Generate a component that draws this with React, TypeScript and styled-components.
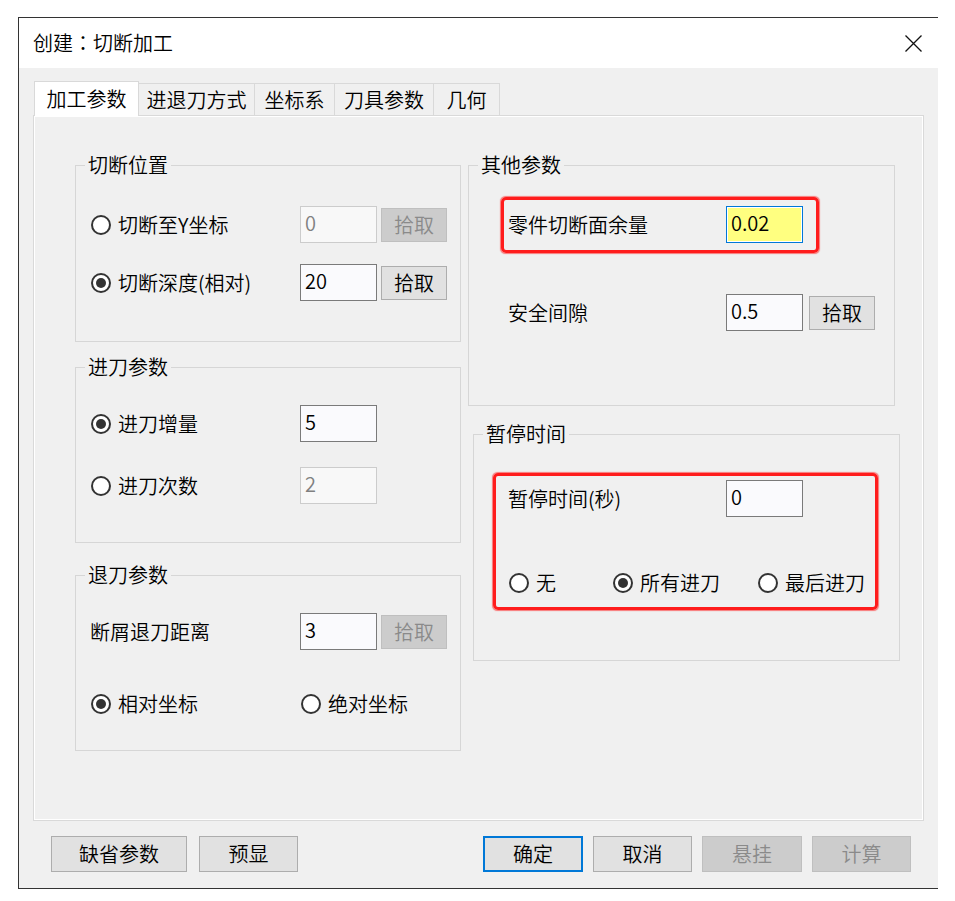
import React from 'react';
import styled, { createGlobalStyle, css } from 'styled-components';

const FONT = `"Noto Sans CJK SC", "Noto Sans", "Liberation Sans", sans-serif`;

const GlobalStyle = createGlobalStyle`
  html, body { margin: 0; padding: 0; background: #ffffff; }
  body { font-family: ${FONT}; color: #000; font-weight: 350; }
  *, *::before, *::after { box-sizing: border-box; }
`;

const Window = styled.div`
  margin: 17px 0 0 18px;
  width: 920px;
  height: 872px;
  border: 1px solid #333333;
  border-right: none;
  background: #f0f0f0;
  display: flex;
  flex-direction: column;
  font-family: ${FONT};
  font-size: 20px;
  font-weight: 350;
`;

const TitleBar = styled.div`
  height: 50px;
  flex: none;
  background: #ffffff;
  display: flex;
  align-items: center;
  justify-content: space-between;
  padding: 0 16px 0 14px;
`;

const Title = styled.span`
  font-size: 20px;
  line-height: 1;
  color: #000;
`;

const Colon = styled.span`
  font-family: "Noto Sans CJK TC", ${FONT};
`;

const CloseButton = styled.span`
  display: flex;
  width: 17px;
  height: 17px;
`;

const Body = styled.div`
  flex: 1;
  display: flex;
  flex-direction: column;
  padding: 13px 14px 0 14px;
`;

const TabStrip = styled.div`
  display: flex;
  align-items: flex-end;
  height: 35px;
  margin-bottom: -1px;
  padding-left: 1px;
  position: relative;
  z-index: 1;
`;

const Tab = styled.div<{ $active?: boolean; $w: number }>`
  width: ${(p) => p.$w}px;
  height: ${(p) => (p.$active ? 35 : 32)}px;
  margin-bottom: ${(p) => (p.$active ? 0 : 1)}px;
  margin-right: -1px;
  border: 1px solid #d9d9d9;
  border-bottom: none;
  background: ${(p) => (p.$active ? '#ffffff' : '#f0f0f0')};
  display: flex;
  align-items: center;
  justify-content: center;
  position: relative;
  z-index: ${(p) => (p.$active ? 2 : 1)};
  font-size: 20px;
  line-height: 1;
  white-space: nowrap;
`;

const Panel = styled.div`
  height: 706px;
  flex: none;
  border: 1px solid #d9d9d9;
  box-shadow: inset 0 0 0 1px #ffffff;
  background: #f0f0f0;
  display: grid;
  grid-template-columns: 386px 432px;
  column-gap: 7px;
  align-items: start;
  padding: 37px 0 0 41px;
`;

const Column = styled.div`
  display: flex;
  flex-direction: column;
  align-items: flex-start;
`;

const Group = styled.fieldset<{ $w: number; $mt?: number; $ml?: number; $pt: number; $pb: number }>`
  width: ${(p) => p.$w}px;
  min-width: 0;
  margin: ${(p) => p.$mt ?? 0}px 0 0 ${(p) => p.$ml ?? 0}px;
  padding: ${(p) => p.$pt}px 0 ${(p) => p.$pb}px 9px;
  border: 1px solid #d6d6d6;
`;

const Legend = styled.legend`
  padding: 0 3px;
  font-size: 20px;
  line-height: 24px;
  color: #000;
`;

const GroupContent = styled.div<{ $gap: number; $indent: number }>`
  display: flex;
  flex-direction: column;
  align-items: flex-start;
  gap: ${(p) => p.$gap}px;
  padding-left: ${(p) => p.$indent}px;
`;

const Row = styled.div<{ $label: number }>`
  display: grid;
  grid-template-columns: ${(p) => p.$label}px auto auto;
  justify-content: start;
  align-items: center;
  height: 37px;
`;

const RadioRow = styled.div<{ $cols: string }>`
  display: grid;
  grid-template-columns: ${(p) => p.$cols};
  justify-content: start;
  align-items: center;
  height: 37px;
`;

const Label = styled.span`
  font-size: 20px;
  line-height: 1;
  white-space: nowrap;
  color: #000;
`;

const RadioLabel = styled.label`
  display: inline-flex;
  align-items: center;
  gap: 7px;
  margin-left: 1px;
  font-size: 20px;
  line-height: 1;
  white-space: nowrap;
`;

const RadioCircle = styled.span<{ $checked?: boolean }>`
  width: 20px;
  height: 20px;
  flex: none;
  border-radius: 50%;
  border: 2px solid #333333;
  background: #ffffff;
  display: flex;
  align-items: center;
  justify-content: center;
  &::after {
    content: '';
    width: 10px;
    height: 10px;
    border-radius: 50%;
    background: ${(p) => (p.$checked ? '#333333' : 'transparent')};
  }
`;

const TextBox = styled.input<{ $focus?: boolean }>`
  width: 77px;
  height: 37px;
  margin: 0;
  padding: 0 4px 4px;
  border: 1px solid #7a7a7a;
  border-radius: 0;
  background: #fafafd;
  font-family: ${FONT};
  font-size: 20px;
  font-weight: 350;
  color: #000;
  outline: none;
  &:disabled {
    border-color: #cccccc;
    background: #f8f8f8;
    color: #808080;
  }
  ${(p) =>
    p.$focus &&
    css`
      border-color: #0078d7;
      background: #ffff80;
      box-shadow: inset 0 0 0 1px #ffffff;
    `}
`;

const Button = styled.button<{ $w: number; $primary?: boolean }>`
  width: ${(p) => p.$w}px;
  height: 36px;
  margin: 0;
  padding: 0;
  font-family: ${FONT};
  font-size: 20px;
  font-weight: 350;
  line-height: 1;
  color: #000;
  background: #e1e1e1;
  border: ${(p) => (p.$primary ? '2px solid #0078d7' : '1px solid #adadad')};
  border-radius: 0;
  &:disabled {
    background: #cccccc;
    border-color: #bfbfbf;
    color: #8a8a8a;
  }
`;

const PickButton = styled(Button)<{ $gap: number }>`
  height: 34px;
  margin-left: ${(p) => p.$gap}px;
`;

const Highlight = styled.div<{ $inline?: boolean }>`
  border: 3px solid #ff1c1c;
  border-radius: 5px;
  box-shadow: 0 0 1px 0.5px rgba(255, 40, 40, 0.6);
  display: flex;
  flex-direction: column;
  align-items: flex-start;
  ${(p) =>
    p.$inline
      ? css`
          margin: -9px -16px -10px -7px;
          padding: 6px 13px 7px 4px;
        `
      : css`
          gap: 47px;
          padding: 4px 10px 6px 12px;
        `}
`;

const ButtonBar = styled.div`
  display: flex;
  justify-content: space-between;
  margin-top: 15px;
  padding: 0 13px 0 18px;
`;

const ButtonGroup = styled.div<{ $gap: number }>`
  display: flex;
  gap: ${(p) => p.$gap}px;
`;

const Radio: React.FC<{ label: string; checked?: boolean }> = ({ label, checked }) => (
  <RadioLabel>
    <RadioCircle $checked={checked} />
    {label}
  </RadioLabel>
);

const tabs = [
  { label: '加工参数', w: 105, active: true },
  { label: '进退刀方式', w: 117 },
  { label: '坐标系', w: 81 },
  { label: '刀具参数', w: 100 },
  { label: '几何', w: 67 },
];

export default function App() {
  return (
    <>
      <GlobalStyle />
      <Window>
        <TitleBar>
          <Title>
            创建<Colon>：</Colon>切断加工
          </Title>
          <CloseButton>
            <svg width="17" height="17" viewBox="0 0 17 17">
              <path d="M0.5 0.5 L16.5 16.5 M16.5 0.5 L0.5 16.5" stroke="#111" strokeWidth="1.3" fill="none" />
            </svg>
          </CloseButton>
        </TitleBar>
        <Body>
          <TabStrip>
            {tabs.map((t) => (
              <Tab key={t.label} $w={t.w} $active={t.active}>
                {t.label}
              </Tab>
            ))}
          </TabStrip>
          <Panel>
            <Column>
              <Group $w={386} $pt={29} $pb={40}>
                <Legend>切断位置</Legend>
                <GroupContent $gap={21} $indent={5}>
                  <Row $label={210}>
                    <Radio label="切断至Y坐标" />
                    <TextBox value="0" disabled readOnly />
                    <PickButton $w={66} $gap={4} disabled>拾取</PickButton>
                  </Row>
                  <Row $label={210}>
                    <Radio label="切断深度(相对)" checked />
                    <TextBox value="20" readOnly />
                    <PickButton $w={66} $gap={4}>拾取</PickButton>
                  </Row>
                </GroupContent>
              </Group>
              <Group $w={386} $mt={13} $pt={26} $pb={38}>
                <Legend>进刀参数</Legend>
                <GroupContent $gap={25} $indent={5}>
                  <Row $label={210}>
                    <Radio label="进刀增量" checked />
                    <TextBox value="5" readOnly />
                  </Row>
                  <Row $label={210}>
                    <Radio label="进刀次数" />
                    <TextBox value="2" disabled readOnly />
                  </Row>
                </GroupContent>
              </Group>
              <Group $w={386} $mt={20} $pt={26} $pb={28}>
                <Legend>退刀参数</Legend>
                <GroupContent $gap={35} $indent={5}>
                  <Row $label={210}>
                    <Label>断屑退刀距离</Label>
                    <TextBox value="3" readOnly />
                    <PickButton $w={66} $gap={4} disabled>拾取</PickButton>
                  </Row>
                  <RadioRow $cols="210px auto">
                    <Radio label="相对坐标" checked />
                    <Radio label="绝对坐标" />
                  </RadioRow>
                </GroupContent>
              </Group>
            </Column>
            <Column>
              <Group $w={427} $pt={29} $pb={74}>
                <Legend>其他参数</Legend>
                <GroupContent $gap={51} $indent={30}>
                  <Highlight $inline>
                    <Row $label={218}>
                      <Label>零件切断面余量</Label>
                      <TextBox value="0.02" $focus readOnly />
                    </Row>
                  </Highlight>
                  <Row $label={218}>
                    <Label>安全间隙</Label>
                    <TextBox value="0.5" readOnly />
                    <PickButton $w={66} $gap={6}>拾取</PickButton>
                  </Row>
                </GroupContent>
              </Group>
              <Group $w={427} $mt={16} $ml={5} $pt={27} $pb={50}>
                <Legend>暂停时间</Legend>
                <GroupContent $gap={0} $indent={10}>
                  <Highlight>
                    <Row $label={218}>
                      <Label>暂停时间(秒)</Label>
                      <TextBox value="0" readOnly />
                    </Row>
                    <RadioRow $cols="104px 145px auto">
                      <Radio label="无" />
                      <Radio label="所有进刀" checked />
                      <Radio label="最后进刀" />
                    </RadioRow>
                  </Highlight>
                </GroupContent>
              </Group>
            </Column>
          </Panel>
          <ButtonBar>
            <ButtonGroup $gap={12}>
              <Button $w={136}>缺省参数</Button>
              <Button $w={99}>预显</Button>
            </ButtonGroup>
            <ButtonGroup $gap={10}>
              <Button $w={100} $primary>确定</Button>
              <Button $w={99}>取消</Button>
              <Button $w={100} disabled>悬挂</Button>
              <Button $w={99} disabled>计算</Button>
            </ButtonGroup>
          </ButtonBar>
        </Body>
      </Window>
    </>
  );
}
